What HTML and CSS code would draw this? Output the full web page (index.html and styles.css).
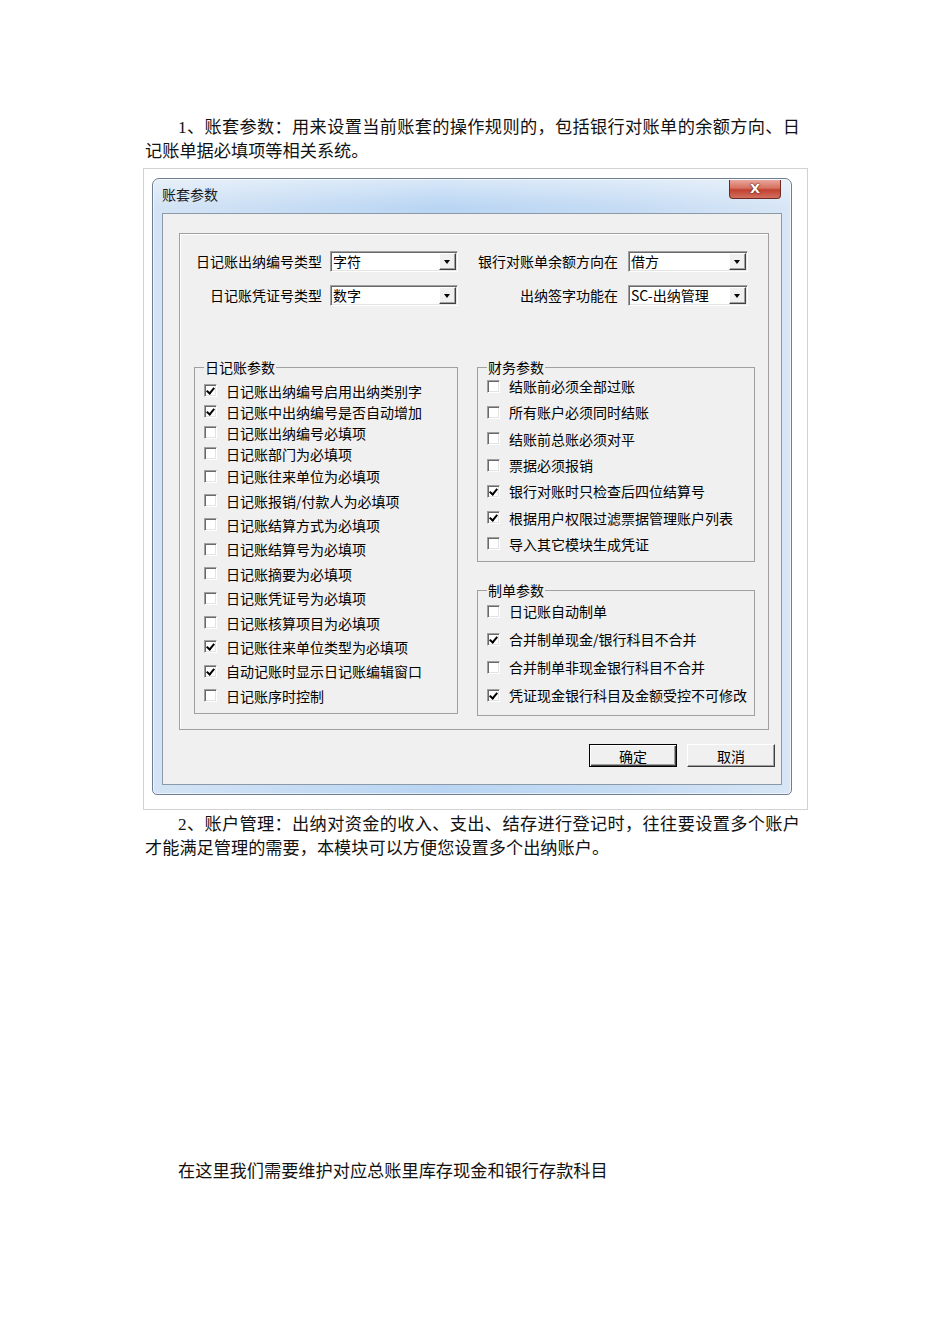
FILE: index.html
```html
<!DOCTYPE html>
<html lang="zh-CN">
  <head>
    <meta charset="UTF-8" />
    <meta name="viewport" content="width=device-width, initial-scale=1.0" />
    <title>账套参数</title>
    <link rel="stylesheet" href="styles.css">
  </head>

  <body>
    <div class="page">
      <p class="para">1、账套参数：用来设置当前账套的操作规则的，包括银行对账单的余额方向、日记账单据必填项等相关系统。</p>

      <div class="shot">
        <div class="window">
          <div class="titlebar">
            <span class="title">账套参数</span>
            <span class="close">X</span>
          </div>

          <div class="client">
            <div class="group">
              <div class="selects">
                <label class="lbl">日记账出纳编号类型</label>
                <div class="combo"><span>字符</span><i class="arrow"></i></div>
                <label class="lbl lbl-r">银行对账单余额方向在</label>
                <div class="combo"><span>借方</span><i class="arrow"></i></div>
                <label class="lbl">日记账凭证号类型</label>
                <div class="combo"><span>数字</span><i class="arrow"></i></div>
                <label class="lbl lbl-r">出纳签字功能在</label>
                <div class="combo"><span>SC-出纳管理</span><i class="arrow"></i></div>
              </div>

              <div class="columns">
                <fieldset class="set-left">
                  <legend>日记账参数</legend>
                  <div class="rows rows-left">
                    <div class="row short"><span class="box on"></span>日记账出纳编号启用出纳类别字</div>
                    <div class="row short"><span class="box on"></span>日记账中出纳编号是否自动增加</div>
                    <div class="row short"><span class="box"></span>日记账出纳编号必填项</div>
                    <div class="row short"><span class="box"></span>日记账部门为必填项</div>
                    <div class="row"><span class="box"></span>日记账往来单位为必填项</div>
                    <div class="row"><span class="box"></span>日记账报销/付款人为必填项</div>
                    <div class="row"><span class="box"></span>日记账结算方式为必填项</div>
                    <div class="row"><span class="box"></span>日记账结算号为必填项</div>
                    <div class="row"><span class="box"></span>日记账摘要为必填项</div>
                    <div class="row"><span class="box"></span>日记账凭证号为必填项</div>
                    <div class="row"><span class="box"></span>日记账核算项目为必填项</div>
                    <div class="row"><span class="box on"></span>日记账往来单位类型为必填项</div>
                    <div class="row"><span class="box on"></span>自动记账时显示日记账编辑窗口</div>
                    <div class="row"><span class="box"></span>日记账序时控制</div>
                  </div>
                </fieldset>

                <div class="right-col">
                  <fieldset class="set-fin">
                    <legend>财务参数</legend>
                    <div class="rows rows-fin">
                      <div class="row"><span class="box"></span>结账前必须全部过账</div>
                      <div class="row"><span class="box"></span>所有账户必须同时结账</div>
                      <div class="row"><span class="box"></span>结账前总账必须对平</div>
                      <div class="row"><span class="box"></span>票据必须报销</div>
                      <div class="row"><span class="box on"></span>银行对账时只检查后四位结算号</div>
                      <div class="row"><span class="box on"></span>根据用户权限过滤票据管理账户列表</div>
                      <div class="row"><span class="box"></span>导入其它模块生成凭证</div>
                    </div>
                  </fieldset>

                  <fieldset class="set-make">
                    <legend>制单参数</legend>
                    <div class="rows rows-make">
                      <div class="row"><span class="box"></span>日记账自动制单</div>
                      <div class="row"><span class="box on"></span>合并制单现金/银行科目不合并</div>
                      <div class="row"><span class="box"></span>合并制单非现金银行科目不合并</div>
                      <div class="row"><span class="box on"></span>凭证现金银行科目及金额受控不可修改</div>
                    </div>
                  </fieldset>
                </div>
              </div>
            </div>

            <div class="buttons">
              <button class="btn btn-default">确定</button>
              <button class="btn">取消</button>
            </div>
          </div>
        </div>
      </div>

      <p class="para para-2">2、账户管理：出纳对资金的收入、支出、结存进行登记时，往往要设置多个账户才能满足管理的需要，本模块可以方便您设置多个出纳账户。</p>

      <p class="para para-3">在这里我们需要维护对应总账里库存现金和银行存款科目</p>
    </div>
  </body>
</html>
```

FILE: styles.css
```css
body {
  margin: 0;
  background: #fff;
  color: #111;
  font-family: "Liberation Serif", "Noto Sans CJK SC", serif;
}

.page {
  padding: 116px 0 40px 143px;
}

.para {
  margin: 0 0 0 2px;
  width: 655px;
  font-size: 17.2px;
  line-height: 24px;
  text-indent: 33px;
  text-align: justify;
}

.para-2 {
  margin-top: 3px;
}

.para-3 {
  margin-top: 299px;
}

/* screenshot frame */
.shot {
  box-sizing: border-box;
  width: 665px;
  height: 642px;
  margin-top: 4px;
  padding: 9px 0 0 8px;
  border: 1px solid #d2d2d2;
}

.window {
  box-sizing: border-box;
  width: 640px;
  height: 617px;
  padding: 0 9px;
  border: 1px solid #6e7f92;
  border-radius: 7px 7px 5px 5px;
  background:
    linear-gradient(180deg, rgba(255, 255, 255, 0.45), rgba(255, 255, 255, 0) 28px),
    linear-gradient(90deg, #d4e4f5, #b9d5f3 45%, #c6dcf4 75%, #d8e6f6);
  box-shadow: inset 0 0 0 1px rgba(255, 255, 255, 0.6);
  font-family: "Noto Sans CJK SC", sans-serif;
  color: #000;
}

.titlebar {
  display: flex;
  justify-content: space-between;
  align-items: flex-start;
  height: 34px;
}

.title {
  margin-top: 6px;
  font-size: 14px;
  line-height: 18px;
  color: #1b1b1b;
}

.close {
  box-sizing: border-box;
  width: 52px;
  height: 19px;
  margin: 1px 1px 0 0;
  border: 1px solid #6f2a22;
  border-top: none;
  border-radius: 0 0 4px 4px;
  background: linear-gradient(180deg, #e9a79d, #d6705f 45%, #c2412f 55%, #d2705f);
  color: #fff;
  font-family: "DejaVu Sans", sans-serif;
  font-weight: bold;
  font-size: 13px;
  line-height: 18px;
  text-align: center;
  text-shadow: 0 0 2px #5a1a12, 0 0 1px #5a1a12;
}

.client {
  box-sizing: border-box;
  width: 620px;
  height: 572px;
  padding: 19px 0 0 16px;
  border: 1px solid #8c99a8;
  background: #f0f0f0;
}

.group {
  box-sizing: border-box;
  width: 590px;
  height: 497px;
  padding-top: 17px;
  border: 1px solid #a0a0a0;
  box-shadow: inset 1px 1px #fff;
}

.selects {
  display: grid;
  grid-template-columns: 150px 128px 170px 120px;
  row-gap: 13px;
  align-items: center;
}

.lbl {
  padding-right: 8px;
  font-size: 14px;
  line-height: 21px;
  text-align: right;
  white-space: nowrap;
}

.lbl-r {
  padding-right: 10px;
}

.combo {
  box-sizing: border-box;
  display: flex;
  align-items: center;
  height: 21px;
  border: 1px solid;
  border-color: #a0a0a0 #fff #fff #a0a0a0;
  box-shadow: inset 1px 1px #696969, inset -1px -1px #e3e3e3;
  background: #fff;
  font-size: 14px;
}

.combo span {
  padding-left: 2px;
  line-height: 19px;
  white-space: nowrap;
}

.arrow {
  position: relative;
  box-sizing: border-box;
  width: 17px;
  height: 17px;
  margin: 0 1px 0 auto;
  border: 1px solid;
  border-color: #fff #404040 #404040 #fff;
  box-shadow: inset -1px -1px #a0a0a0;
  background: #f0f0f0;
}

.arrow::after {
  content: "";
  position: absolute;
  left: 4px;
  top: 6px;
  border-left: 3.5px solid transparent;
  border-right: 3.5px solid transparent;
  border-top: 4px solid #000;
}

.columns {
  display: flex;
  margin-top: 52px;
  padding-left: 14px;
}

fieldset {
  box-sizing: border-box;
  margin: 0;
  padding: 0 0 0 9px;
  min-width: 0;
  border: 1px solid #a0a0a0;
}

legend {
  padding: 0 1px;
  font-size: 14px;
  line-height: 18px;
}

.set-left {
  width: 264px;
  height: 356px;
}

.right-col {
  display: flex;
  flex-direction: column;
  margin-left: 19px;
}

.set-fin {
  width: 278px;
  height: 204px;
}

.set-make {
  width: 278px;
  height: 135px;
  margin-top: 19px;
}

.rows-left {
  padding-top: 4px;
}

.rows-fin {
  margin-top: -3px;
}

.rows-make {
  margin-top: -2px;
}

.row {
  display: flex;
  align-items: center;
  gap: 9px;
  height: 24.4px;
  font-size: 14px;
  white-space: nowrap;
}

.row.short {
  height: 21px;
}

.rows-fin .row {
  height: 26.3px;
}

.rows-make .row {
  height: 28px;
}

.box {
  position: relative;
  box-sizing: border-box;
  flex: none;
  width: 13px;
  height: 13px;
  border: 1px solid;
  border-color: #a0a0a0 #fff #fff #a0a0a0;
  box-shadow: inset 1px 1px #696969, inset -1px -1px #e3e3e3;
  background: #fff;
}

.box.on::after {
  content: "";
  position: absolute;
  left: 3px;
  top: 1px;
  width: 3px;
  height: 6px;
  border: solid #000;
  border-width: 0 2px 2px 0;
  transform: rotate(40deg);
}

.buttons {
  display: flex;
  justify-content: flex-end;
  gap: 10px;
  margin-top: 14px;
  padding-right: 6px;
}

.btn {
  box-sizing: border-box;
  width: 88px;
  height: 23px;
  padding: 0;
  border: 1px solid;
  border-color: #fff #404040 #404040 #fff;
  box-shadow: inset -1px -1px #a0a0a0;
  background: #f0f0f0;
  font-family: "Noto Sans CJK SC", sans-serif;
  font-size: 14px;
  line-height: 20px;
  color: #000;
}

.btn-default {
  border-color: #000;
  box-shadow: inset 1px 1px #fff, inset -1px -1px #404040, inset -2px -2px #a0a0a0;
}
```
